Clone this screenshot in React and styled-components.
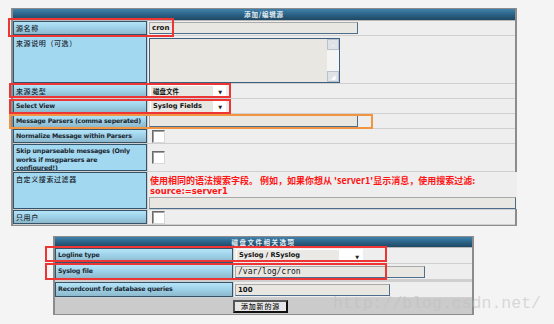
import React from "react";
import styled, { createGlobalStyle } from "styled-components";

const GlobalStyle = createGlobalStyle`
  html, body {
    margin: 0;
    padding: 0;
    background: #f4f4f4;
  }
  body {
    font-family: "DejaVu Sans", "Noto Sans CJK SC", sans-serif;
  }
`;

function App() {
  return (
    <Page>
      <GlobalStyle />
      <Panel $width={506}>
        <PanelHeader $h={11}>添加/编辑源</PanelHeader>
        <Row $cols="134px" $h={14}>
          <Label $cjk>源名称</Label>
          <Cell>
            <TextInput $w={209}>cron</TextInput>
          </Cell>
        </Row>
        <Row $cols="134px" $h={47}>
          <Label $flat $cjk>来源说明（可选）</Label>
          <Cell $top>
            <TextArea>
              <Scrollbar>
                <ScrollBtn>–</ScrollBtn>
                <ScrollBtn>◢</ScrollBtn>
              </Scrollbar>
            </TextArea>
          </Cell>
        </Row>
        <Row $cols="134px" $h={14}>
          <Label $cjk>来源类型</Label>
          <Cell>
            <Select $w={76} $cjk>
              <span>磁盘文件</span>
              <Arrow>▼</Arrow>
            </Select>
          </Cell>
        </Row>
        <Row $cols="134px" $h={14}>
          <Label>Select View</Label>
          <Cell>
            <Select $w={76}>
              <span>Syslog Fields</span>
              <Arrow>▼</Arrow>
            </Select>
          </Cell>
        </Row>
        <Row $cols="134px" $h={14}>
          <Label>Message Parsers (comma seperated)</Label>
          <Cell>
            <TextInput $w={209} />
          </Cell>
        </Row>
        <Row $cols="134px" $h={14}>
          <Label>Normalize Message within Parsers</Label>
          <Cell>
            <Checkbox />
          </Cell>
        </Row>
        <Row $cols="134px" $h={27}>
          <Label $flat>
            Skip unparseable messages (Only
            <br />
            works if msgparsers are
            <br />
            configured!)
          </Label>
          <Cell>
            <Checkbox />
          </Cell>
        </Row>
        <Row $cols="134px" $h={37}>
          <Label $flat $cjk>自定义搜索过滤器</Label>
          <Cell $top>
            <Hint>
              使用相同的语法搜索字段。 例如，如果你想从 'server1'显示消息，使用搜索过滤:
            </Hint>
            <HintCode>source:=server1</HintCode>
            <TextInput $w={367} />
          </Cell>
        </Row>
        <Row $cols="134px" $h={14}>
          <Label $cjk>只用户</Label>
          <Cell>
            <Checkbox />
          </Cell>
        </Row>
      </Panel>

      <Panel $width={421} $ml={42} $mt={10}>
        <PanelHeader $h={10} $spaced>磁盘文件相关选项</PanelHeader>
        <Row $cols="178px" $h={15}>
          <Label>Logline type</Label>
          <Cell>
            <Select $w={127} $white>
              <span>Syslog / RSyslog</span>
              <Arrow>▼</Arrow>
            </Select>
          </Cell>
        </Row>
        <Row $cols="178px" $h={15}>
          <Label>Syslog file</Label>
          <Cell>
            <TextInput $w={190} $mono>
              /var/log/cron
            </TextInput>
          </Cell>
        </Row>
        <Row $cols="178px" $h={15} $gapTop>
          <Label>Recordcount for database queries</Label>
          <Cell>
            <TextInput $w={155}>100</TextInput>
          </Cell>
        </Row>
        <ButtonRow>
          <Button>添加新的源</Button>
        </ButtonRow>
      </Panel>

      <Mark $x={8} $y={18} $w={166} $h={19} />
      <Mark $x={9} $y={83} $w={222} $h={15} />
      <Mark $x={9} $y={99} $w={222} $h={15} />
      <Mark $x={9} $y={114} $w={364} $h={15} $orange />
      <Mark $x={45} $y={246} $w={342} $h={16} />
      <Mark $x={45} $y={263} $w={342} $h={17} />

      <Watermark>http://blog.csdn.net/</Watermark>
    </Page>
  );
}

export default App;

const Page = styled.div`
  position: relative;
  width: 554px;
  height: 324px;
  overflow: hidden;
  padding: 8px 0 0 11px;
  box-sizing: border-box;
`;

const Panel = styled.div`
  width: ${(p) => p.$width}px;
  margin-left: ${(p) => p.$ml || 0}px;
  margin-top: ${(p) => p.$mt || 0}px;
  box-sizing: border-box;
  border: 1px solid #8c8c8c;
  border-left-width: 2px;
  border-right-width: 2px;
  background: #cfcfcf;
  display: flex;
  flex-direction: column;
`;

const PanelHeader = styled.div`
  height: ${(p) => p.$h}px;
  line-height: ${(p) => p.$h}px;
  background: linear-gradient(#3f82ad, #2a6083 55%, #1f4863);
  color: #e8eef2;
  font-family: "Noto Sans CJK SC", sans-serif;
  font-weight: bold;
  font-size: 6.5px;
  letter-spacing: ${(p) => (p.$spaced ? "1.5px" : "0.8px")};
  text-align: center;
  border-bottom: 1px solid #b8b8b8;
`;

const Row = styled.div`
  display: grid;
  grid-template-columns: ${(p) => p.$cols} 1fr;
  column-gap: 1px;
  height: ${(p) => p.$h}px;
  margin-top: ${(p) => (p.$gapTop ? 2 : 0)}px;
  border-bottom: 1px solid #cfcfcf;
  background: #cfcfcf;
`;

const Label = styled.div`
  box-sizing: border-box;
  border: 1px solid #35546a;
  background: ${(p) =>
    p.$flat
      ? "#a3d9f0"
      : "linear-gradient(#b6e4f7, #9fd3ea 45%, #8db8cb)"};
  color: #1c2731;
  font-family: ${(p) =>
    p.$cjk
      ? '"Noto Sans CJK SC", sans-serif'
      : '"DejaVu Sans", "Noto Sans CJK SC", sans-serif'};
  font-weight: ${(p) => (p.$cjk ? 500 : "bold")};
  font-size: ${(p) => (p.$cjk ? "7px" : "6.3px")};
  letter-spacing: ${(p) => (p.$cjk ? "0.6px" : "-0.2px")};
  white-space: nowrap;
  line-height: 8.5px;
  padding: 2px 1px 0 2px;
  overflow: hidden;
`;

const Cell = styled.div`
  background: #eeeeee;
  display: flex;
  flex-direction: column;
  justify-content: ${(p) => (p.$top ? "flex-start" : "center")};
  padding: ${(p) => (p.$top ? "1px 1px 0 1px" : "0 1px")};
`;

const TextInput = styled.div`
  box-sizing: border-box;
  width: ${(p) => p.$w}px;
  height: 12px;
  flex: 0 0 12px;
  background: #e9e7e2;
  border: 1px solid #4c6d8c;
  border-top-color: #a9a9a9;
  border-left-color: #a9a9a9;
  font-family: ${(p) =>
    p.$mono ? '"DejaVu Sans Mono", monospace' : '"DejaVu Sans", sans-serif'};
  font-weight: ${(p) => (p.$mono ? "normal" : "bold")};
  font-size: ${(p) => (p.$mono ? "8px" : "7px")};
  line-height: 10px;
  padding-left: 2px;
  color: #111;
`;

const TextArea = styled.div`
  box-sizing: border-box;
  width: 191px;
  height: 45px;
  margin-top: 1px;
  background: #e9e7e2;
  border: 1px solid #3d5f80;
  display: flex;
  justify-content: flex-end;
`;

const Scrollbar = styled.div`
  width: 12px;
  background: #f4f4f4;
  display: flex;
  flex-direction: column;
  justify-content: space-between;
`;

const ScrollBtn = styled.div`
  height: 11px;
  background: #dfe3e8;
  border: 1px solid #b9c2cc;
  box-sizing: border-box;
  color: #fff;
  font-size: 6px;
  line-height: 9px;
  text-align: center;
  font-family: "DejaVu Sans", sans-serif;
`;

const Select = styled.div`
  box-sizing: border-box;
  width: ${(p) => p.$w}px;
  height: 13px;
  margin-left: 1px;
  background: #ffffff;
  padding: 1px;
  display: flex;
  align-items: center;
  justify-content: space-between;
  span {
    flex: ${(p) => (p.$white ? "0 0 auto" : "0 0 60px")};
    width: ${(p) => (p.$white ? "100px" : "auto")};
    height: 11px;
    background: ${(p) => (p.$white ? "#eae9e5" : "#e8e6e1")};
    font-family: ${(p) =>
      p.$cjk
        ? '"Noto Sans CJK SC", sans-serif'
        : '"DejaVu Sans", sans-serif'};
    font-weight: bold;
    font-size: ${(p) => (p.$cjk ? "6.5px" : "6.6px")};
    line-height: 11px;
    padding-left: 2px;
    color: #111;
    white-space: nowrap;
  }
`;

const Arrow = styled.i`
  font-style: normal;
  font-size: 5px;
  color: #222;
  padding-right: 3px;
  font-family: "DejaVu Sans", sans-serif;
  margin-top: 2px;
`;

const Checkbox = styled.div`
  box-sizing: border-box;
  width: 13px;
  height: 13px;
  margin-left: 3px;
  background: #fff;
  border: 1px solid #6b6b6b;
  border-right-color: #d8d8d8;
  border-bottom-color: #d8d8d8;
  box-shadow: inset 1px 1px 0 #a0a0a0;
`;

const Hint = styled.div`
  flex: 0 0 11px;
  height: 11px;
  overflow: hidden;
  color: #ff1414;
  font-family: "Noto Sans CJK SC", sans-serif;
  font-weight: bold;
  font-size: 9px;
  line-height: 11px;
  padding-left: 1px;
  margin-top: 2px;
  white-space: nowrap;
`;

const HintCode = styled.div`
  flex: 0 0 11px;
  height: 11px;
  color: #ff1414;
  font-family: "DejaVu Sans", sans-serif;
  font-weight: bold;
  font-size: 8.4px;
  line-height: 11px;
  padding-left: 1px;
`;

const ButtonRow = styled.div`
  height: 16px;
  background: #cbcbcb;
  display: flex;
  align-items: center;
  justify-content: center;
`;

const Button = styled.div`
  box-sizing: border-box;
  height: 13px;
  padding: 0 6px;
  border: 2px solid #111;
  border-top-color: #555;
  border-left-color: #555;
  background: #e6e6e6;
  font-family: "Noto Sans CJK SC", sans-serif;
  font-weight: 500;
  font-size: 7px;
  letter-spacing: 0.8px;
  line-height: 9px;
  color: #111;
  margin-right: 6px;
`;

const Mark = styled.div`
  position: absolute;
  left: ${(p) => p.$x}px;
  top: ${(p) => p.$y}px;
  width: ${(p) => p.$w}px;
  height: ${(p) => p.$h}px;
  box-sizing: border-box;
  border: 2px solid ${(p) => (p.$orange ? "#f39442" : "#ee3535")};
  pointer-events: none;
`;

const Watermark = styled.div`
  position: absolute;
  left: 333px;
  top: 294px;
  font-family: "Liberation Mono", monospace;
  font-size: 16.5px;
  color: rgba(190, 190, 190, 0.55);
  letter-spacing: 0;
  pointer-events: none;
`;
